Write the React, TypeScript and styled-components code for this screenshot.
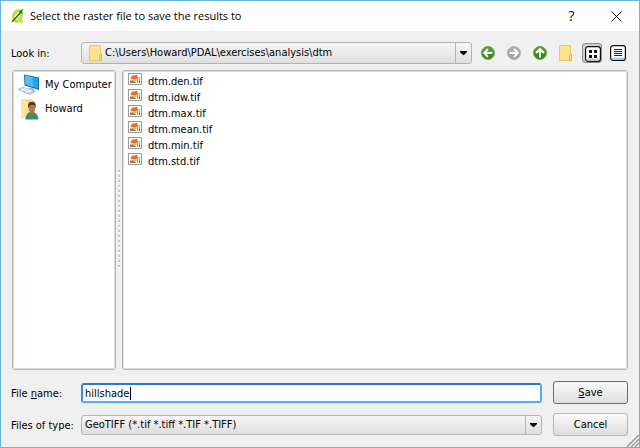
import React, { useLayoutEffect, useRef, useState } from "react";
import styled, { createGlobalStyle } from "styled-components";

const GlobalStyle = createGlobalStyle`
  *, *::before, *::after { box-sizing: border-box; }
  body {
    margin: 0;
    background: #f0f0f0;
    color: #000;
    font: 11px/16px "DejaVu Sans Condensed", "DejaVu Sans", sans-serif;
  }
  button, input, select { font: inherit; color: inherit; margin: 0; }
  svg { flex: none; }
`;

const Dialog = styled.main`
  display: flex;
  flex-direction: column;
  min-height: 100vh;
  border: 1px solid #64b5e6;
  background: #f0f0f0;
  position: relative;
`;

const TitleBar = styled.header`
  display: flex;
  align-items: center;
  height: 30px;
  padding: 0 0 0 9px;
  background: #fff;
`;

const Title = styled.h1`
  flex: 1;
  margin: 0 0 0 4px;
  font: 400 11px/16px "Open Sans", sans-serif;
`;

const CaptionButton = styled.button`
  display: flex;
  align-items: center;
  justify-content: center;
  width: 45px;
  height: 28px;
  padding: 0;
  border: 0;
  background: transparent;
  font: 14px/20px "Open Sans", sans-serif;
`;

const Body = styled.div`
  display: flex;
  flex: 1;
  flex-direction: column;
  padding: 11px 11px 11px 10px;
`;

const LookRow = styled.div`
  display: grid;
  grid-template-columns: 70px minmax(0, 1fr) auto;
  align-items: center;
  margin-bottom: 6px;
`;

const FieldLabel = styled.label`
  padding-top: 2px;
  white-space: nowrap;
`;

const Combo = styled.div<{ $tall?: boolean }>`
  position: relative;
  height: ${(p) => (p.$tall ? 22 : 20)}px;
`;

const ComboSelect = styled.select<{ $icon?: boolean }>`
  appearance: none;
  display: block;
  width: 100%;
  height: 100%;
  padding: 0 22px 0 ${(p) => (p.$icon ? 23 : 3)}px;
  border: 1px solid #b4b4b4;
  border-radius: 3px;
  background: linear-gradient(#f6f6f6, #dedede);
  outline: none;
`;

const ComboIcon = styled.span`
  position: absolute;
  left: 8px;
  top: 3px;
  display: flex;
  pointer-events: none;
`;

const ComboArrow = styled.span`
  position: absolute;
  top: 1px;
  right: 1px;
  bottom: 1px;
  width: 16px;
  display: flex;
  align-items: center;
  justify-content: center;
  border-left: 1px solid #b4b4b4;
  pointer-events: none;
`;

const Tools = styled.div`
  display: flex;
  align-items: center;
  gap: 6px;
  margin: 0 0 0 6px;
`;

const ToolButton = styled.button<{ $pressed?: boolean }>`
  display: flex;
  align-items: center;
  justify-content: center;
  width: 20px;
  height: 20px;
  padding: ${(p) => (p.$pressed ? "2px 0 0 2px" : "0")};
  border: 1px solid ${(p) => (p.$pressed ? "#8c8c8c" : "transparent")};
  border-radius: 3px;
  background: ${(p) => (p.$pressed ? "#cecece" : "transparent")};
`;

const Panels = styled.div`
  display: grid;
  grid-template-columns: 104px 6px minmax(0, 1fr);
  flex: 1;
  margin: 0 0 11px 1px;
`;

const Pane = styled.ul`
  margin: 0;
  border: 1px solid #b4b4b4;
  outline: 1px solid #dcdcdc;
  outline-offset: -2px;
  border-radius: 3px;
  background: #fff;
  list-style: none;
`;

const PlacesPane = styled(Pane)`
  padding: 2px 4px;
`;

const FilesPane = styled(Pane)`
  padding: 2px 5px;
`;

const Place = styled.li`
  display: flex;
  align-items: center;
  gap: 4px;
  height: 24px;
  line-height: 18px;
  white-space: nowrap;
`;

const FileItem = styled.li`
  display: flex;
  align-items: flex-start;
  gap: 6px;
  height: 16px;
  line-height: 18px;
`;

const Splitter = styled.div`
  display: flex;
  align-items: center;
  justify-content: center;
`;

const Form = styled.form`
  display: grid;
  grid-template-columns: 70px minmax(0, 1fr) 75px;
  row-gap: 9px;
  align-items: center;
`;

const InputBox = styled.div`
  position: relative;
  height: 20px;
`;

const NameInput = styled.input`
  display: block;
  width: 100%;
  height: 100%;
  padding: 2px 2px 0;
  border: 2px solid #55aaff;
  border-top-color: #2678d2;
  border-left-color: #3a8be0;
  border-radius: 3px;
  background: #fff;
  outline: none;
  caret-color: transparent;
`;

const Caret = styled.span`
  position: absolute;
  top: 4px;
  bottom: 3px;
  width: 1px;
  background: #000;
  pointer-events: none;
`;

const PushButton = styled.button<{ $primary?: boolean }>`
  height: 23px;
  padding: 0;
  border: 1px solid ${(p) => (p.$primary ? "#6e6e6e" : "#b4b4b4")};
  border-radius: 3px;
  background: linear-gradient(#fafafa, #dedede);
`;

const FieldCell = styled.div`
  padding-right: 11px;
`;

const Grip = styled.span`
  position: absolute;
  right: 0;
  bottom: 0;
  display: flex;
`;

const AppIcon = () => (
  <svg width="16" height="16" viewBox="0 0 16 16">
    <ellipse cx="7.5" cy="8" rx="4" ry="5.5" fill="#eaf4b4" stroke="#bfdc3c" strokeWidth="2.8" transform="rotate(18 7.5 8)" />
    <path d="M8 10l4.5 4.5" stroke="#c6e052" strokeWidth="3" />
    <path d="M2.5 13.5L11 4" stroke="#176b25" strokeWidth="1.2" />
    <path d="M9 3.5L13 .5 12 5.5 10.5 5.5z" fill="#168329" />
    <path d="M1.5 14l2-1.5" stroke="#444" strokeWidth="1" />
  </svg>
);

const FolderIcon = () => (
  <svg width="14" height="16" viewBox="0 0 14 16">
    <path d="M.5.5h11v9h1v6H.5z" fill="#ffe391" stroke="#edc75c" />
    <path d="M10.5 15.5v-5l1-1h1v6z" fill="#fbdc7c" stroke="#e5b83f" />
  </svg>
);

const CircleArrow = ({ turn, gray }: { turn: number; gray?: boolean }) => (
  <svg width="14" height="14" viewBox="0 0 14 14">
    <circle cx="7" cy="7" r="6.5" fill={gray ? "#a0a0a0" : "#3b8718"} stroke={gray ? "#b5b5b5" : "#73a95a"} />
    <path d="M1.5 6a5.5 5.5 0 0 1 11 0q-5.5 2-11 0z" fill={gray ? "#adadad" : "#579e30"} />
    <g transform={`rotate(${turn} 7 7)`} fill="none" stroke="#fff" strokeWidth="2">
      <path d="M3 7h8.5" />
      <path d="M7 3L3.2 7 7 11" />
    </g>
  </svg>
);

const ViewIcon = ({ detail }: { detail?: boolean }) => (
  <svg width="16" height="16" viewBox="0 0 16 16">
    <rect x=".6" y=".6" width="14.8" height="14.8" rx="2.5" fill="#fff" stroke="#111" strokeWidth="1.2" />
    <path d="M2 12.5h12" stroke="#dcecfb" />
    <path d="M2 13.5h12" stroke="#a4cdf2" />
    {detail ? (
      <path d="M4 4.5h8M4 6.5h8M4 8.5h8M4 10.5h8" stroke="#222" />
    ) : (
      <path d="M4 4h3v3H4zM9 4h3v3H9zM4 9h3v3H4zM9 9h3v3H9z" fill="#111" />
    )}
  </svg>
);

const ComputerIcon = () => (
  <svg width="24" height="24" viewBox="0 0 24 24">
    <path d="M7 1.5L22 4.5V17L7.5 12.5z" fill="#176fa8" />
    <path d="M8 2.5L21 5.3v10.2L8.5 11.6z" fill="#22a4ee" />
    <path d="M8 2.5l7 1.5 1.5 10-8-2.4z" fill="#56bdf7" />
    <path d="M13 14.5l4 1.2v2.3l2 .5-3 1.2-6-1.6z" fill="#a9b9c4" />
    <path d="M1 16.5l5-2.2 12 3.8-5 3.4z" fill="#c8d3da" stroke="#8c9ba6" strokeWidth=".6" />
    <path d="M4 16l10 3.6M6 15l9.5 3.3M9 14.6l-5 3M14 16.5l-4.5 3" stroke="#fff" strokeWidth=".7" />
  </svg>
);

const UserIcon = () => (
  <svg width="24" height="24" viewBox="0 0 24 24">
    <path d="M4 2.5h11l3 2V21H4z" fill="#f6cf68" />
    <path d="M4 2.5l7 2v18l-7-3z" fill="#ffe49b" />
    <path d="M8.5 22.5c0-5 2.5-7.5 6-7.5s7 2.5 7 7.5z" fill="#388e67" />
    <path d="M13 14h4v2.5l-2 1.5-2-1.5z" fill="#a86d4e" />
    <ellipse cx="15" cy="10.5" rx="3.3" ry="4.3" fill="#ad7958" />
    <path d="M11.3 11c-1-6 2-6.2 4-6 3 0 4 2 3.2 6l-1.2-3h-4z" fill="#493a32" />
  </svg>
);

const ImageIcon = () => (
  <svg width="14" height="12" viewBox="0 0 14 12">
    <rect x=".5" y=".5" width="13" height="11" fill="#fff" stroke="#9a9a9a" />
    <path d="M2 2h10v8H2z" fill="#f3efec" />
    <path d="M2.5 6l1.5-3.2L9 2l1.5 3-4 1.6z" fill="#ee6c2a" />
    <path d="M2 7.5h4L8 10H2z" fill="#a9714a" />
    <path d="M6 7l2.5-.7v2z" fill="#93b44e" />
    <path d="M9.5 5v5M11.5 4.5v3" stroke="#9da0a6" />
    <path d="M11.5 7.5V10" stroke="#a72b2b" />
  </svg>
);

const SplitDots = () => (
  <svg width="4" height="100" viewBox="0 0 4 100">
    {Array.from({ length: 20 }, (_, i) => (
      <g key={i}>
        <rect x="1" y={i * 5 + 1} width="2" height="2" fill="#fff" />
        <rect x="1" y={i * 5} width="2" height="2" fill="#c4c4c4" />
      </g>
    ))}
  </svg>
);

const DownArrow = () => (
  <svg width="7" height="4" viewBox="0 0 7 4">
    <path d="M0 0h7v1L4 4H3L0 1z" fill="#000" />
  </svg>
);

const files = ["dtm.den.tif", "dtm.idw.tif", "dtm.max.tif", "dtm.mean.tif", "dtm.min.tif", "dtm.std.tif"];

function FileNameField() {
  const [name, setName] = useState("hillshade");
  const [caretLeft, setCaretLeft] = useState(0);
  const input = useRef<HTMLInputElement>(null);

  useLayoutEffect(() => {
    const context = document.createElement("canvas").getContext("2d");
    if (!input.current || !context) return;
    const style = getComputedStyle(input.current);
    context.font = `${style.fontSize} ${style.fontFamily}`;
    setCaretLeft(Math.ceil(context.measureText(name).width) + 4);
  }, [name]);

  return (
    <InputBox>
      <NameInput id="file-name" ref={input} value={name} onChange={(e) => setName(e.target.value)} />
      <Caret style={{ left: caretLeft }} />
    </InputBox>
  );
}

export default function App() {
  return (
    <>
      <GlobalStyle />
      <Dialog>
        <TitleBar>
          <AppIcon />
          <Title>Select the raster file to save the results to</Title>
          <CaptionButton aria-label="Help">?</CaptionButton>
          <CaptionButton aria-label="Close">
            <svg width="11" height="11" viewBox="0 0 11 11">
              <path d="M.5.5l10 10M10.5.5l-10 10" stroke="#000" />
            </svg>
          </CaptionButton>
        </TitleBar>
        <Body>
          <LookRow>
            <FieldLabel htmlFor="look-in">Look in:</FieldLabel>
            <Combo $tall>
              <ComboSelect id="look-in" $icon>
                <option>C:\Users\Howard\PDAL\exercises\analysis\dtm</option>
              </ComboSelect>
              <ComboIcon><FolderIcon /></ComboIcon>
              <ComboArrow><DownArrow /></ComboArrow>
            </Combo>
            <Tools>
              <ToolButton aria-label="Back"><CircleArrow turn={0} /></ToolButton>
              <ToolButton aria-label="Forward"><CircleArrow turn={180} gray /></ToolButton>
              <ToolButton aria-label="Parent directory"><CircleArrow turn={90} /></ToolButton>
              <ToolButton aria-label="Create new folder"><FolderIcon /></ToolButton>
              <ToolButton aria-label="List view" aria-pressed="true" $pressed><ViewIcon /></ToolButton>
              <ToolButton aria-label="Detail view"><ViewIcon detail /></ToolButton>
            </Tools>
          </LookRow>
          <Panels>
            <PlacesPane>
              <Place><ComputerIcon />My Computer</Place>
              <Place><UserIcon />Howard</Place>
            </PlacesPane>
            <Splitter><SplitDots /></Splitter>
            <FilesPane>
              {files.map((file) => (
                <FileItem key={file}><ImageIcon />{file}</FileItem>
              ))}
            </FilesPane>
          </Panels>
          <Form onSubmit={(e) => e.preventDefault()}>
            <FieldLabel htmlFor="file-name">File <u>n</u>ame:</FieldLabel>
            <FieldCell><FileNameField /></FieldCell>
            <PushButton type="submit" $primary><u>S</u>ave</PushButton>
            <FieldLabel htmlFor="file-type">Files of type:</FieldLabel>
            <FieldCell>
              <Combo>
                <ComboSelect id="file-type">
                  <option>GeoTIFF (*.tif *.tiff *.TIF *.TIFF)</option>
                </ComboSelect>
                <ComboArrow><DownArrow /></ComboArrow>
              </Combo>
            </FieldCell>
            <PushButton type="button">Cancel</PushButton>
          </Form>
        </Body>
        <Grip>
          <svg width="12" height="12" viewBox="0 0 12 12">
            <path d="M0 12L12 0M4 12l8-8M8 12l4-4" stroke="#fff" strokeWidth="2" transform="translate(1 1)" />
            <path d="M0 12L12 0M4 12l8-8M8 12l4-4" stroke="#8f8f8f" strokeWidth="1.4" />
          </svg>
        </Grip>
      </Dialog>
    </>
  );
}
